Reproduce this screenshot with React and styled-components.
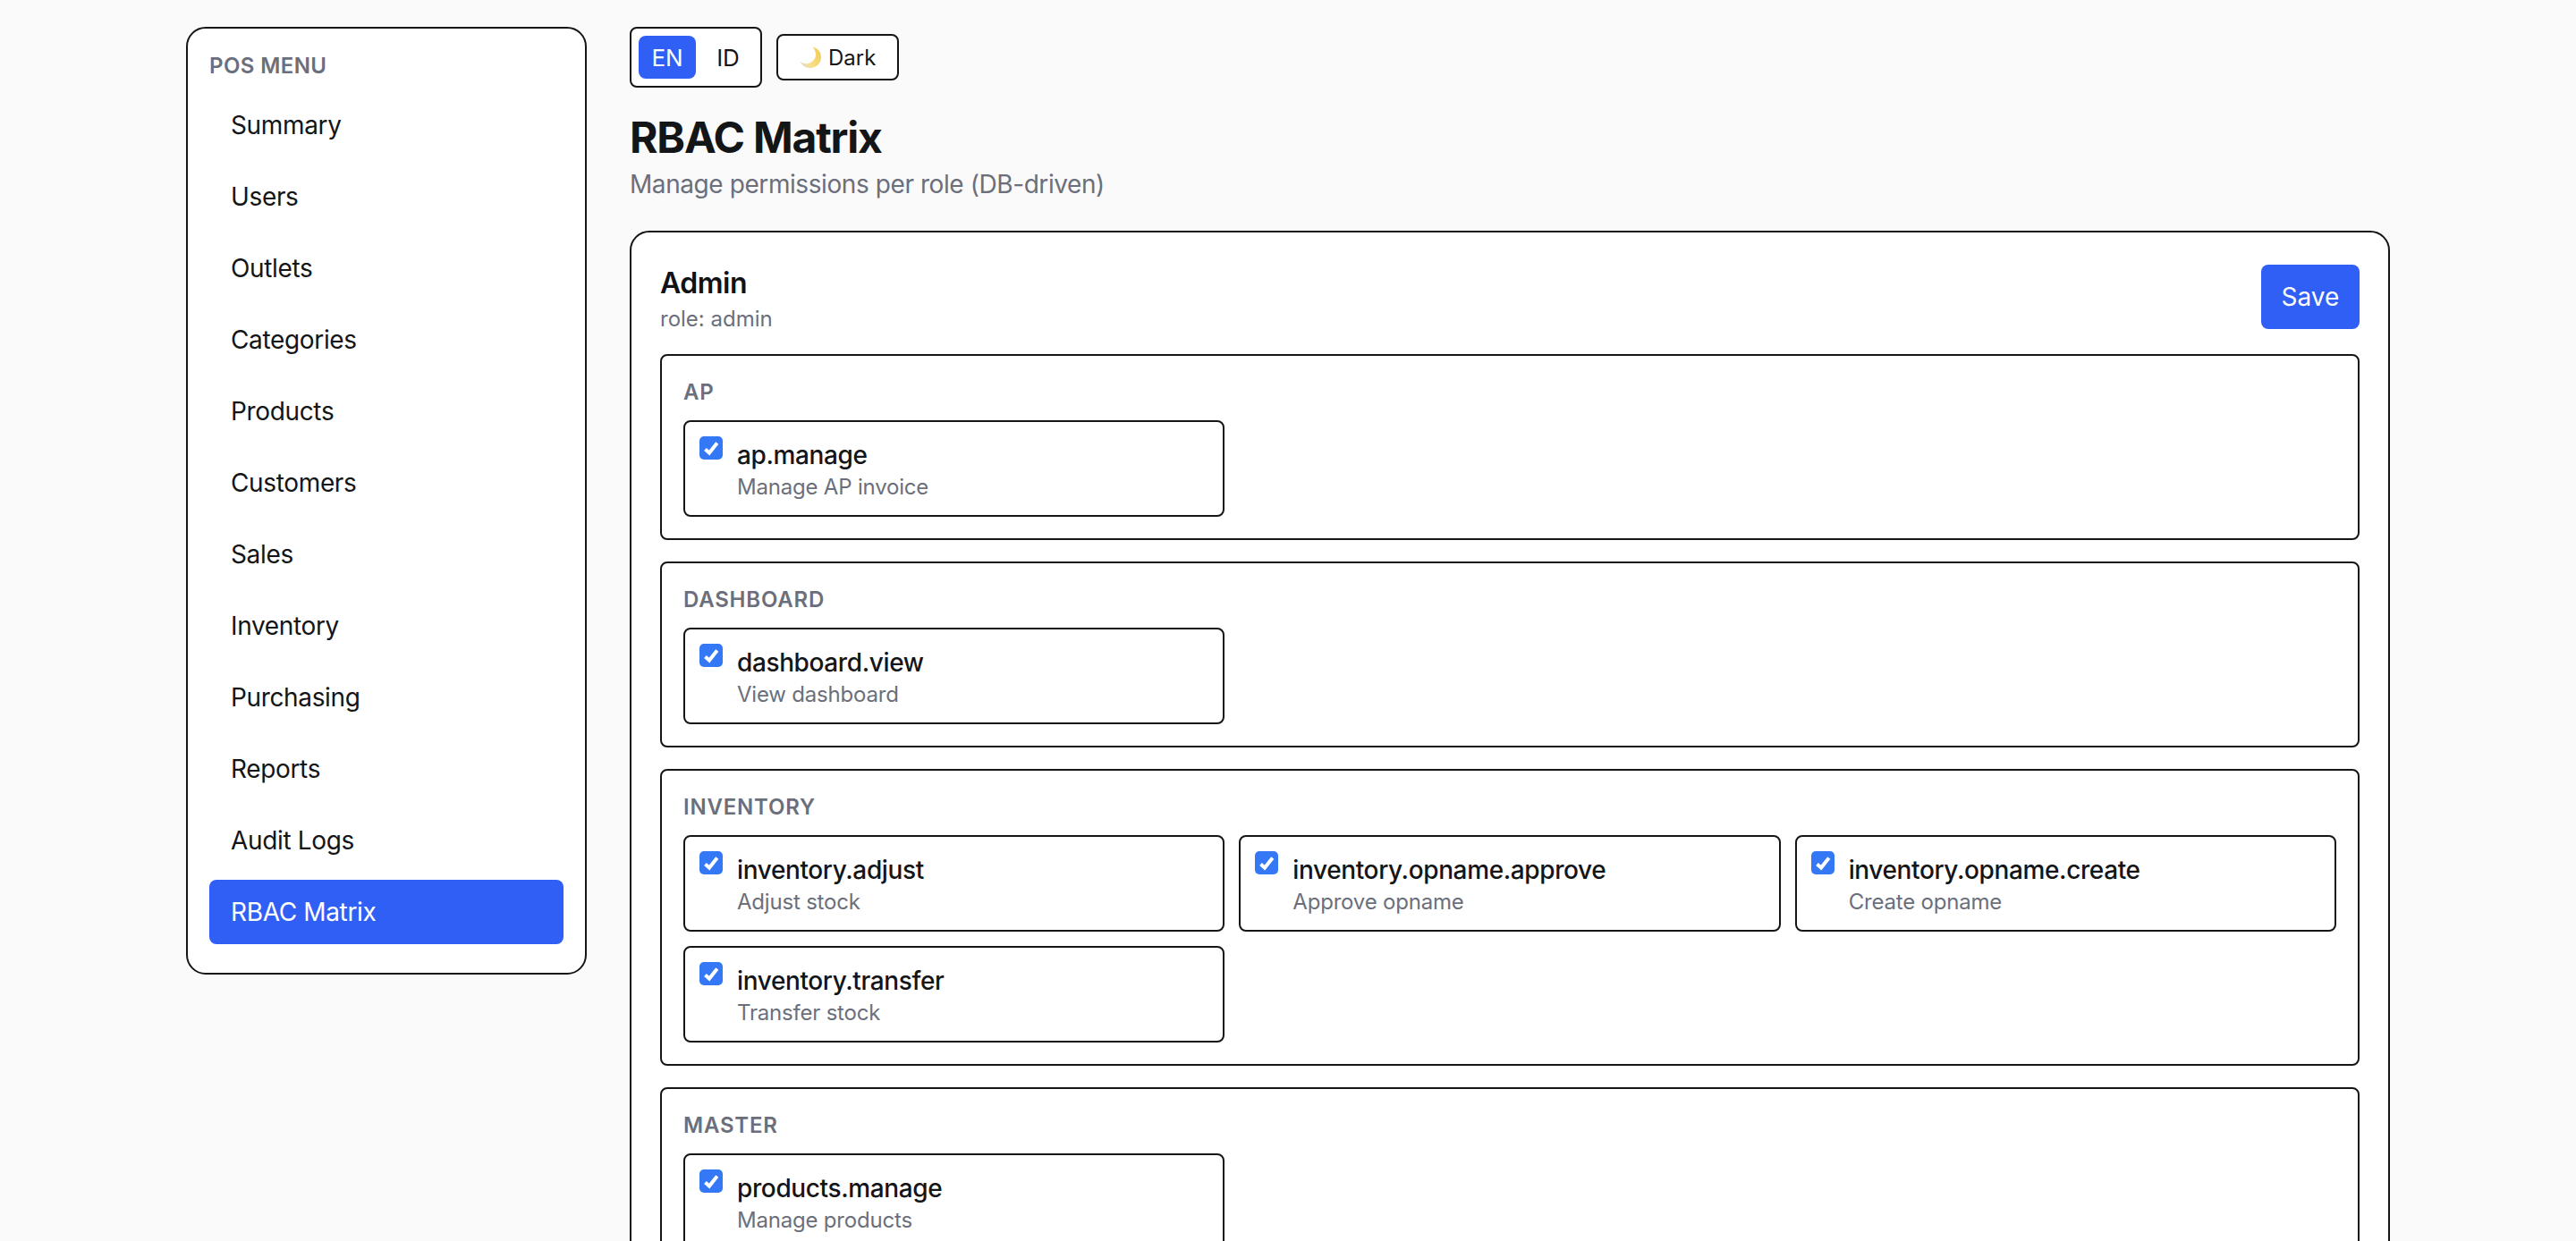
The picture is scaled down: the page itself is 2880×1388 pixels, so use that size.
import styled, { createGlobalStyle } from 'styled-components';

const GlobalStyle = createGlobalStyle`
  html, body {
    margin: 0;
    height: 1388px;
    overflow: hidden;
    background: #fafafa;
    color: #111214;
    font-family: Inter, "Liberation Sans", sans-serif;
  }
  * { box-sizing: border-box; }
`;

const Page = styled.div`
  width: 2464px;
  margin: 0 auto;
  padding-top: 30px;
  display: grid;
  grid-template-columns: 448px 1fr;
  gap: 48px;
  align-items: start;
`;

const Sidebar = styled.aside`
  background: #fff;
  border: 2px solid #141517;
  border-radius: 22px;
  padding: 26px 24px 32px;
`;

const SideTitle = styled.div`
  font-size: 24px;
  line-height: 32px;
  font-weight: 600;
  letter-spacing: 0.4px;
  color: #6b6f7b;
  margin-bottom: 14px;
`;

const Nav = styled.nav`
  display: flex;
  flex-direction: column;
  gap: 8px;
`;

const NavItem = styled.a`
  display: flex;
  align-items: center;
  height: 72px;
  padding: 0 24px;
  border-radius: 8px;
  font-size: 28px;
  letter-spacing: -0.35px;
  background: ${(p) => (p.$active ? '#2f5ff5' : 'transparent')};
  color: ${(p) => (p.$active ? '#fff' : '#141517')};
`;

const Main = styled.main`
  min-width: 0;
`;

const Toolbar = styled.div`
  display: flex;
  align-items: center;
  gap: 16px;
  margin-bottom: 26px;
`;

const LangSwitch = styled.div`
  display: flex;
  gap: 8px;
  padding: 8px;
  border: 2px solid #141517;
  border-radius: 8px;
  background: #fff;
`;

const LangButton = styled.button`
  height: 48px;
  width: ${(p) => (p.$active ? '64px' : '56px')};
  border: 0;
  border-radius: 8px;
  padding: 0;
  font: 400 26px Inter, sans-serif;
  background: ${(p) => (p.$active ? '#2f5ff5' : 'transparent')};
  color: ${(p) => (p.$active ? '#fff' : '#141517')};
`;

const ThemeButton = styled.button`
  display: flex;
  align-items: center;
  gap: 8px;
  height: 52px;
  padding: 0 24px;
  border: 2px solid #141517;
  border-radius: 8px;
  background: #fff;
  font: 400 24px Inter, sans-serif;
  color: #141517;
`;

const Title = styled.h1`
  margin: 0;
  font-size: 48px;
  line-height: 60px;
  font-weight: 700;
  letter-spacing: -1.2px;
  color: #141517;
`;

const Subtitle = styled.p`
  margin: 2px 0 32px;
  font-size: 28px;
  line-height: 40px;
  letter-spacing: -0.42px;
  color: #6b6f7b;
`;

const Card = styled.section`
  background: #fff;
  border: 2px solid #141517;
  border-radius: 22px;
  padding: 32px;
`;

const CardHeader = styled.header`
  display: flex;
  justify-content: space-between;
  align-items: center;
  height: 80px;
  margin-bottom: 24px;
`;

const RoleInfo = styled.div`
  padding-top: 6px;
`;

const RoleName = styled.div`
  font-size: 32px;
  line-height: 44px;
  font-weight: 600;
  letter-spacing: -0.5px;
`;

const RoleKey = styled.div`
  font-size: 24px;
  line-height: 36px;
  color: #6b6f7b;
`;

const SaveButton = styled.button`
  width: 110px;
  height: 72px;
  border: 0;
  border-radius: 8px;
  background: #2f5ff5;
  color: #fff;
  font: 400 28px Inter, sans-serif;
`;

const Groups = styled.div`
  display: flex;
  flex-direction: column;
  gap: 24px;
`;

const Group = styled.div`
  border: 2px solid #141517;
  border-radius: 8px;
  padding: 26px 24px 24px;
`;

const GroupTitle = styled.div`
  font-size: 24px;
  line-height: 30px;
  font-weight: 600;
  letter-spacing: 0.8px;
  color: #6b6f7b;
  margin-bottom: 16px;
`;

const PermGrid = styled.div`
  display: grid;
  grid-template-columns: repeat(3, 1fr);
  gap: 16px;
`;

const Perm = styled.label`
  display: flex;
  gap: 16px;
  height: 108px;
  padding: 16px;
  border: 2px solid #141517;
  border-radius: 8px;
`;

const CheckWrap = styled.span`
  position: relative;
  flex: none;
  width: 26px;
  height: 26px;
`;

const CheckInput = styled.input`
  appearance: none;
  display: block;
  width: 26px;
  height: 26px;
  margin: 0;
  border-radius: 5px;
  background: #3478f6;
`;

const CheckMark = styled.svg`
  position: absolute;
  inset: 0;
  width: 26px;
  height: 26px;
`;

const PermName = styled.div`
  margin-top: 4px;
  font-size: 28px;
  line-height: 34px;
  font-weight: 500;
  letter-spacing: -0.38px;
  color: #141517;
`;

const PermDesc = styled.div`
  margin-top: 3px;
  font-size: 24px;
  line-height: 32px;
  letter-spacing: -0.2px;
  color: #6b6f7b;
`;

const navItems = [
  'Summary',
  'Users',
  'Outlets',
  'Categories',
  'Products',
  'Customers',
  'Sales',
  'Inventory',
  'Purchasing',
  'Reports',
  'Audit Logs',
  'RBAC Matrix',
];

const groups = [
  { name: 'AP', perms: [['ap.manage', 'Manage AP invoice']] },
  { name: 'DASHBOARD', perms: [['dashboard.view', 'View dashboard']] },
  {
    name: 'INVENTORY',
    perms: [
      ['inventory.adjust', 'Adjust stock'],
      ['inventory.opname.approve', 'Approve opname'],
      ['inventory.opname.create', 'Create opname'],
      ['inventory.transfer', 'Transfer stock'],
    ],
  },
  { name: 'MASTER', perms: [['products.manage', 'Manage products']] },
];

function MoonIcon() {
  return (
    <svg width="24" height="24" viewBox="0 0 24 24">
      <defs>
        <linearGradient id="moon" x1="0.95" y1="0.35" x2="0.15" y2="0.85">
          <stop offset="0" stopColor="#f3cf5c" />
          <stop offset="0.7" stopColor="#f7e08e" />
          <stop offset="1" stopColor="#e6dcc0" />
        </linearGradient>
      </defs>
      <path
        d="M14.500.500C20 1.500 24 6 24 12c0 6.600-5.400 12-12 12-5 0-9.500-2.500-11.500-7.500 2.500 2.500 5.500 3 8.500 2.500 5.500-1 9-5.500 9-10 0-3.500-1.500-6.500-3.500-8.500z"
        fill="url(#moon)"
      />
    </svg>
  );
}

function PermItem({ name, desc }) {
  return (
    <Perm>
      <CheckWrap>
        <CheckInput type="checkbox" defaultChecked />
        <CheckMark viewBox="0 0 26 26">
          <path
            d="M6.500 14.500l4.500 4 8.800-11"
            fill="none"
            stroke="#fff"
            strokeWidth="4"
          />
        </CheckMark>
      </CheckWrap>
      <div>
        <PermName>{name}</PermName>
        <PermDesc>{desc}</PermDesc>
      </div>
    </Perm>
  );
}

export default function App() {
  return (
    <>
      <GlobalStyle />
      <Page>
        <Sidebar>
          <SideTitle>POS MENU</SideTitle>
          <Nav>
            {navItems.map((item) => (
              <NavItem key={item} $active={item === 'RBAC Matrix'}>
                {item}
              </NavItem>
            ))}
          </Nav>
        </Sidebar>
        <Main>
          <Toolbar>
            <LangSwitch>
              <LangButton $active>EN</LangButton>
              <LangButton>ID</LangButton>
            </LangSwitch>
            <ThemeButton>
              <MoonIcon />
              Dark
            </ThemeButton>
          </Toolbar>
          <Title>RBAC Matrix</Title>
          <Subtitle>Manage permissions per role (DB-driven)</Subtitle>
          <Card>
            <CardHeader>
              <RoleInfo>
                <RoleName>Admin</RoleName>
                <RoleKey>role: admin</RoleKey>
              </RoleInfo>
              <SaveButton>Save</SaveButton>
            </CardHeader>
            <Groups>
              {groups.map((group) => (
                <Group key={group.name}>
                  <GroupTitle>{group.name}</GroupTitle>
                  <PermGrid>
                    {group.perms.map(([name, desc]) => (
                      <PermItem key={name} name={name} desc={desc} />
                    ))}
                  </PermGrid>
                </Group>
              ))}
            </Groups>
          </Card>
        </Main>
      </Page>
    </>
  );
}
